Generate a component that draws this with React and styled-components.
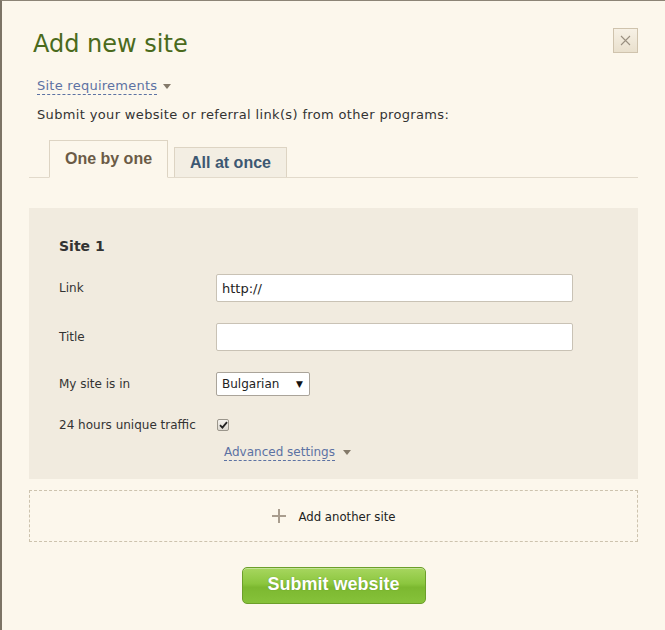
import React from "react";
import styled, { createGlobalStyle } from "styled-components";

const Global = createGlobalStyle`
  html, body { margin: 0; padding: 0; background: #fcf7ec; }
  body { font-family: "DejaVu Sans", Verdana, sans-serif; color: #333; }
  * { box-sizing: border-box; }
`;

const Page = styled.div`
  width: 665px;
  min-height: 630px;
  background: #fcf7ec;
  border-left: 2px solid #7c7466;
  border-top: 1px solid #8c8476;
  padding: 0 27px 0 27px;
`;

const Header = styled.div`
  display: flex;
  justify-content: space-between;
  align-items: flex-start;
  padding: 27px 0 0 4px;
`;

const Title = styled.h1`
  margin: 2px 0 0 0;
  font-family: "DejaVu Sans", Verdana, sans-serif;
  font-weight: normal;
  font-size: 24px;
  line-height: 28px;
  color: #4a6a1c;
`;

const CloseButton = styled.button`
  width: 25px;
  height: 25px;
  margin-right: 0;
  padding: 0;
  border: 1px solid #cfc3ad;
  background: linear-gradient(#f7f1e5, #e9e0cd);
  display: flex;
  align-items: center;
  justify-content: center;
  cursor: pointer;
`;

const Toggle = styled.div`
  display: flex;
  align-items: center;
  gap: 6px;
  margin: 20px 0 0 8px;
  height: 16px;
`;

const DashedLink = styled.a`
  font-size: ${(p) => p.$size ?? 13}px;
  letter-spacing: ${(p) => p.$ls ?? 0.25}px;
  line-height: 16px;
  color: #5c72a3;
  text-decoration: none;
  border-bottom: 1px dashed #5c72a3;
  cursor: pointer;
`;

const Caret = styled.span`
  width: 0;
  height: 0;
  border-left: 4px solid transparent;
  border-right: 4px solid transparent;
  border-top: 5px solid #847a6a;
  margin-top: 1px;
`;

const Intro = styled.p`
  margin: 13px 0 0 8px;
  font-size: 13px;
  letter-spacing: 0.35px;
  line-height: 16px;
  color: #333;
`;

const Tabs = styled.div`
  display: flex;
  align-items: flex-end;
  gap: 6px;
  margin-top: 17px;
  padding-left: 20px;
  border-bottom: 1px solid #e2dacb;
  height: 38px;
`;

const Tab = styled.div`
  font-family: "Liberation Sans", Arial, sans-serif;
  font-weight: bold;
  font-size: 16px;
  display: flex;
  align-items: center;
  justify-content: center;
  border: 1px solid #ddd4c3;
  border-bottom: ${(p) => (p.$active ? "1px solid #fcf7ec" : "none")};
  margin-bottom: ${(p) => (p.$active ? "-1px" : "0")};
  background: ${(p) => (p.$active ? "#fcf7ec" : "#f3eee3")};
  color: ${(p) => (p.$active ? "#6b5b46" : "#3d5872")};
  width: ${(p) => p.$w}px;
  height: ${(p) => (p.$active ? 38 : 30)}px;
  padding-top: ${(p) => (p.$active ? 0 : 1)}px;
  cursor: pointer;
`;

const Panel = styled.div`
  margin-top: 30px;
  background: #f1ebdf;
  padding: 29px 30px 20px 30px;
  height: 271px;
`;

const SiteTitle = styled.h2`
  margin: 0;
  font-size: 14px;
  font-weight: bold;
  line-height: 18px;
  color: #333;
`;

const Form = styled.div`
  display: grid;
  grid-template-columns: 157px 1fr;
  align-items: center;
  margin-top: 19px;
`;

const Label = styled.label`
  font-size: 12px;
  color: #333;
  height: ${(p) => p.$h}px;
  display: flex;
  align-items: center;
  margin-top: ${(p) => p.$mt || 0}px;
`;

const Field = styled.div`
  height: ${(p) => p.$h}px;
  display: flex;
  align-items: center;
  margin-top: ${(p) => p.$mt || 0}px;
`;

const TextInput = styled.input`
  width: 357px;
  height: 28px;
  border: 1px solid #c9c2b5;
  border-radius: 2px;
  background: #fff;
  padding: 0 5px;
  font-family: "DejaVu Sans", Verdana, sans-serif;
  font-size: 13px;
  color: #222;
  outline: none;
`;

const Select = styled.div`
  width: 94px;
  height: 24px;
  border: 1px solid #aaa49a;
  border-radius: 2px;
  background: #fff;
  display: flex;
  align-items: center;
  justify-content: space-between;
  padding: 0 6px 0 5px;
  font-size: 12px;
  color: #222;
`;

const SelectArrow = styled.span`
  font-size: 9px;
  color: #111;
`;

const Check = styled.span`
  width: 12px;
  height: 12px;
  margin-left: 1px;
  border: 1px solid #9b968c;
  border-radius: 2px;
  background: linear-gradient(#f4f2ee, #dcd8d0);
  display: flex;
  align-items: center;
  justify-content: center;
`;

const AdvancedRow = styled.div`
  grid-column: 2;
  display: flex;
  align-items: center;
  gap: 8px;
  margin: 12px 0 0 8px;
  height: 16px;
`;

const AddBox = styled.div`
  margin-top: 11px;
  height: 52px;
  border: 1px dashed #cdc3ae;
  display: flex;
  align-items: center;
  justify-content: center;
  gap: 13px;
  font-family: "DejaVu Sans Condensed", "Liberation Sans", Arial, sans-serif;
  font-size: 13px;
  color: #222;
  cursor: pointer;
`;

const Actions = styled.div`
  display: flex;
  justify-content: center;
  margin-top: 25px;
`;

const SubmitButton = styled.button`
  width: 184px;
  height: 37px;
  border: 1px solid #6c9f2a;
  border-radius: 5px;
  background: linear-gradient(#a7d65f 0%, #8bc63e 45%, #7cb830 55%, #86c23a 100%);
  box-shadow: inset 0 1px 0 rgba(255,255,255,0.35);
  color: #fff;
  font-family: "Liberation Sans", Arial, sans-serif;
  font-weight: bold;
  font-size: 18px;
  text-shadow: 0 0 1px rgba(60,90,20,0.5);
  cursor: pointer;
  padding: 0 0 2px 0;
`;

export default function App() {
  return (
    <>
      <Global />
      <Page>
        <Header>
          <Title>Add new site</Title>
          <CloseButton aria-label="Close">
            <svg width="11" height="11" viewBox="0 0 11 11">
              <path d="M1 1L10 10M10 1L1 10" stroke="#9a9080" strokeWidth="1.1" />
            </svg>
          </CloseButton>
        </Header>
        <Toggle>
          <DashedLink>Site requirements</DashedLink>
          <Caret />
        </Toggle>
        <Intro>Submit your website or referral link(s) from other programs:</Intro>
        <Tabs>
          <Tab $active $w={119}>One by one</Tab>
          <Tab $w={113}>All at once</Tab>
        </Tabs>
        <Panel>
          <SiteTitle>Site 1</SiteTitle>
          <Form>
            <Label $h={28}>Link</Label>
            <Field $h={28}>
              <TextInput defaultValue="http://" />
            </Field>
            <Label $h={28} $mt={21}>Title</Label>
            <Field $h={28} $mt={21}>
              <TextInput />
            </Field>
            <Label $h={24} $mt={21}>My site is in</Label>
            <Field $h={24} $mt={21}>
              <Select>
                <span>Bulgarian</span>
                <SelectArrow>▼</SelectArrow>
              </Select>
            </Field>
            <Label $h={14} $mt={22}>24 hours unique traffic</Label>
            <Field $h={14} $mt={22}>
              <Check>
                <svg width="9" height="8" viewBox="0 0 9 8">
                  <path d="M1 4.2L3.4 6.6L8 1.2" stroke="#222" strokeWidth="1.8" fill="none" />
                </svg>
              </Check>
            </Field>
            <AdvancedRow>
              <DashedLink $size={12} $ls={0}>Advanced settings</DashedLink>
              <Caret />
            </AdvancedRow>
          </Form>
        </Panel>
        <AddBox>
          <svg width="14" height="14" viewBox="0 0 14 14">
            <path d="M7 0V14M0 7H14" stroke="#a99d8e" strokeWidth="2" />
          </svg>
          <span>Add another site</span>
        </AddBox>
        <Actions>
          <SubmitButton>Submit website</SubmitButton>
        </Actions>
      </Page>
    </>
  );
}
